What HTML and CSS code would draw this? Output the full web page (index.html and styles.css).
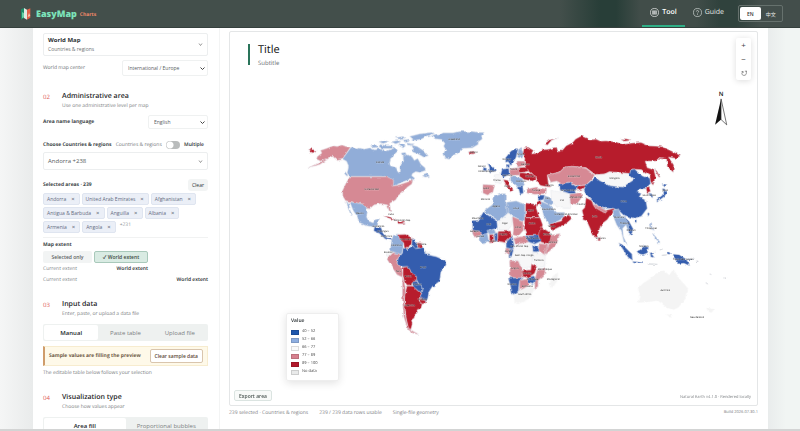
FILE: index.html
```html
<!DOCTYPE html>
<html lang="en">
<head>
<meta charset="utf-8">
<title>EasyMap Charts</title>
<link rel="stylesheet" href="styles.css">
</head>
<body>
<header class="topbar">
  <a class="brand" href="#">
    <svg class="brand-mark" viewBox="0 0 30 36" aria-hidden="true">
      <path d="M0 4 9 0v30l-9 5z" fill="#1f8a68"/><path d="M9 0l9 5v30l-9-5z" fill="#dfe9e2"/><path d="M18 5l10-4v28l-10 6z" fill="#e2604a"/><path d="M3 12l6 4v12l-6 3z" fill="#67cfa5"/><path d="M20 27l4-12 4 9z" fill="#f7c4b0"/>
    </svg>
    <span class="brand-name">EasyMap</span><span class="brand-sub">Charts</span>
  </a>
  <nav class="nav">
    <a class="nav-link active" href="#">
      <svg viewBox="0 0 28 28" aria-hidden="true"><circle cx="14" cy="14" r="12.5" fill="none" stroke="#fff" stroke-width="2"/><path d="M7 8h14v12H7z" fill="#fff" opacity=".85"/><path d="M7 12h14M7 16h14M12 8v12M17 8v12" stroke="#5c6864" stroke-width="1"/></svg>Tool</a>
    <a class="nav-link" href="#">
      <svg viewBox="0 0 28 28" aria-hidden="true"><circle cx="14" cy="14" r="12.5" fill="none" stroke="#dde3e0" stroke-width="2"/><path d="M10.500 11a3.500 3.500 0 1 1 5 3.200c-1 .6-1.500 1.200-1.500 2.800M14 19v2.500" fill="none" stroke="#dde3e0" stroke-width="2"/></svg>Guide</a>
  </nav>
  <div class="lang"><button class="on">EN</button><button>中文</button></div>
</header>

<main class="page">
  <aside class="side">
    <button class="mapcard"><span><b>World Map</b><small>Countries &amp; regions</small></span><svg class="chev" viewBox="0 0 10 10"><path d="M2 3l3 4 3-4"/></svg></button>
    <div class="row center-row"><label for="center">World map center</label>
      <select id="center" class="wide"><option>International / Europe</option></select></div>

    <section class="step">
      <div class="head"><span class="num">02</span><div><h2>Administrative area</h2><p>Use one administrative level per map</p></div></div>
      <div class="row lang-row"><label class="strong" for="names">Area name language</label>
        <select id="names"><option>English</option></select></div>
      <div class="row choose"><span class="strong">Choose Countries &amp; regions</span><span class="muted">Countries &amp; regions</span>
        <label class="switch"><input type="checkbox">Multiple</label></div>
      <button class="combo">Andorra +238<svg class="chev" viewBox="0 0 10 10"><path d="M2 3l3 4 3-4"/></svg></button>
      <div class="row selected"><span class="strong">Selected areas · 239</span><button class="clear">Clear</button></div>
      <div class="chips">
        <button>Andorra<i>×</i></button><button>United Arab Emirates<i>×</i></button><button>Afghanistan<i>×</i></button>
        <button>Antigua &amp; Barbuda<i>×</i></button><button>Anguilla<i>×</i></button><button>Albania<i>×</i></button>
        <button>Armenia<i>×</i></button><button>Angola<i>×</i></button><span>+231</span>
      </div>
      <div class="extent">
        <span class="strong">Map extent</span>
        <div class="extent-grid"><button>Selected only</button><button class="on">✓ World extent</button></div>
        <div class="pair small"><span>Current extent</span><b>World extent</b></div>
        <div class="pair"><span>Current extent</span><b>World extent</b></div>
      </div>
    </section>

    <section class="step">
      <div class="head"><span class="num">03</span><div><h2>Input data</h2><p>Enter, paste, or upload a data file</p></div></div>
      <div class="tabs"><button class="on">Manual</button><button>Paste table</button><button>Upload file</button></div>
      <div class="notice"><b>Sample values are filling the preview</b><button>Clear sample data</button></div>
      <p class="note">The editable table below follows your selection</p>
    </section>

    <section class="step">
      <div class="head"><span class="num">04</span><div><h2>Visualization type</h2><p>Choose how values appear</p></div></div>
      <div class="tabs"><button class="on">Area fill</button><button>Proportional bubbles</button></div>
    </section>
  </aside>

  <section class="stage">
    <div class="canvas">
      <svg class="world" viewBox="690 96 1584 1119" role="img" aria-label="World map">
        <defs><filter id="coast" filterUnits="userSpaceOnUse" x="690" y="96" width="1584" height="1119" color-interpolation-filters="sRGB"><feTurbulence type="fractalNoise" baseFrequency=".07" numOctaves="2" seed="4"/><feDisplacementMap in="SourceGraphic" scale="9" xChannelSelector="R" yChannelSelector="G"/></filter></defs>
        <g filter="url(#coast)">
        <g class="land" transform="translate(900 375)">
          <path class="p" d="M152 66L138 64 128 60 112 64 100 62 80 70 62 76 66 84 52 95 50 102 62 108 78 101 60 112 25 128 60 118 84 102 98 94 106 100 112 106 127 104z"/>
          <path class="r" d="M26 76l8-2 4-5 3 5 11 2-8 3-4 5-6-3z"/>
          <path class="l" d="M154 66l14 5 12-2 14 3 16-4 15 6 12-3 13 2 12 4 13-5 13-6 6 12-8 8-5 8-8 6-3 12 2 10 18 6 4 12 6 4 2-6-2-10 4-10 8-10-2-14 12-6 15 7 7 11 10-6 10 18 12 10 2 8-18 6-12-2-10 6-2 6 10 8-8 6-10-2-17 6-18 8-14 6-6-14 2-6-20-10H150l-8-10 4-22-6-14-12-6z"/>
          <path class="l" d="M212 62l18-2 4 6-14 2zM240 58l22 4 18 0-4 8-26 0-12-4zM236 50l18-4 14 4-18 5zM274 50l20-4 10 4-16 6zM296 60l10-4 12 6-8 6zM335 60l17 4 22 14 12 14-14 4-14-8-16-6-8-6 8-4zM310 44l18-2 4 6-16 4zM330 34l30-8 35-4 10 4-25 8-15 8-20 4zM286 38l24-4 6 4-18 4zM320 54l24 2-6 4-14 0zM304 84l12-2 6 8-12 4zM368 152l16-6 6 8-14 2zM136 140l8 10-2 4-8-8z"/>
          <path class="l" d="M398 32l22-3 10-6 30 0 18-4 40 0 18 3 18 0-8 10 2 10-12 8 0 8-18 10-30 2-12 14-14 6-14 13-10-4-6-14 6-12-6-10 4-8-10-12-20-2z"/>
          <path class="r" d="M507 80l14-2 6 4-6 5-12-1z"/>
          <path class="p" d="M150 155h112l20 10-2 18 20-4 40-14-4 12-14 10-10 12-16 12-8 14-18 10 3 26-5-3-5-18-20-4-20 4-14 12-10-4-8-10-12-2-28-6-14-3-8-14-1-16 9-20z"/>
          <path class="l" d="M150 231l28 4 12 3 10 10 3 12-3 15 6 13 14 6 6-10 14-3-7 17-10 8-22-4-24-10-4-16-13-20zM140 228l8 11 3 18 8 14-8-6-7-18z"/>
          <path class="r" d="M254 273l16 2 20 12-14-4zM290 288l16 2 14 6-28 0z"/>
          <path class="b" d="M224 304l20 3 6 18 12 14 20 3 8 6-14 0-20-6-16-16-18-8z"/>
        </g>
        <g class="land" transform="translate(1020 660)">
          <path class="l" d="M160 46l16-4 6 16 10 8-2 18-4 20-16-4-18-8 2-22z"/>
          <path class="r" d="M176 44l22-1 20 11-2 14-12 18-10-2-2-16-12-10z"/>
          <path class="b" d="M218 56l12 10 6 18-10 3-10-15z"/><path class="r" d="M232 68l18 2-2 12-12 2z"/>
          <path class="w" d="M142 97l12-3 8 6-12 12-10-5z"/>
          <path class="p" d="M150 104l12-6 10 2 12 4-8 10-4 16 14 12 4 18-2 12-16-8-16-24-14-22z"/>
          <path class="b" d="M190 84l14 4 14-12 10 10 22-4 6 10 8 12 26 6 28 12 2 12-16 22-4 28-22 16-10 16-4 22-10 6-14-12 8-18 2-6-12-16-6-10-16-26-12-16-20 0-12-10 4-16 12-14z"/>
          <path class="w" d="M254 98l8-3 10 4-8 6z"/>
          <path class="r" d="M190 142l14-2 12 16 14 12 2 16-14 2-4 10-12 0-8-12-4-16z"/>
          <path class="b" d="M218 186l14-2 8 12 10 10-2 12-12-4-16-14z"/>
          <path class="r" d="M202 198l16 0 16 14 12 8-6 12 0 16 8 4-4 14-12 4 2 8-8 6-2 10-8 6 2 12-4 16-8-2-6-26-4-30-2-40zM242 234l18 10-10 9-10-5z"/>
          <path class="p" d="M188 168l6 18 4 24-4 30 4 50 8 34 14 10 18 10-18-4-16-12-12-38-4-50z"/>
        </g>
        <g class="land" transform="translate(1410 375)">
          <path class="r" d="M164 68L176 66 192 76 186 86 206 84 218 74 236 72 262 66 266 80 280 74 290 62 310 52 318 42 336 32 350 38 362 44 380 42 394 48 410 47 440 50 460 58 486 54 515 52 540 62 575 64 600 74 635 92 620 100 598 96 614 120 612 142 594 124 592 100 570 98 560 108 528 108 534 128 554 134 560 158 550 180 542 166 542 150 516 134 486 132 482 146 440 142 380 150 350 128 310 124 286 126 270 142 234 150 236 170 240 186 214 182 200 168 204 158 186 146 176 138 164 122 166 98 160 84z"/>
          <path class="r" d="M226 56l14-12 24-4-20 8-10 12zM454 40l22 2 10 4-18 2z"/>
          <path class="p" d="M234 150l36-8 16-16 24-2 40 6 26 20-10 14-16 16-30 2-20-10-24 4-14-8-18 4z"/>
          <path class="b" d="M270 176l30-4 20 12 18 0-22 12 4 10-20 0-28-10z"/><path class="r" d="M322 188l12-6 20-2-14 12-16 4z"/>
          <path class="p" d="M300 208l36-6 2 14-16 22-20-2zM172 192l28-6 32 6-2 14-34 2-24-4z"/>
          <path class="w" d="M244 196l56 10 4 44-22 0-20-4-16-22z"/>
          <path class="l" d="M212 228l28 12 22 22 24 0-4 18-32 16-8 8-20-34zM226 212l18 6 8 22-12 0-18-10z"/>
          <path class="b" d="M206 210l20 0-4 14-16 4z"/>
          <path class="r" d="M240 298l36-10 10-16 14-2 6 12-16 14-44 22zM200 232l12-6 4 10-12 8z"/>
          <path class="b" d="M108 98l16-20 14-8 8 2-6 24-8 16-8 10-8-12-8 2z"/><path class="l" d="M146 74l10-8 6 22-4 12-14-4z"/>
          <path class="b" d="M54 112l10 8 12 10 2 8-20 4 2-14zM42 126l10 4-2 8-10-2zM98 132l20-2 2 18-20 10-6-12zM112 118l8 0 0 10-6 0z"/>
          <path class="p" d="M120 130l28-2 4 22-30 2zM40 178l36 2-6 22-16 8-14-6z"/>
          <path class="w" d="M74 150l20-4 8 16-8 14-18-4z"/>
          <path class="r" d="M102 164l14 2 2 12 14 18-6 4-18-20zM150 142l36 4 18 12-14 10-26-4-14-10zM148 128l22-2 8 12-26 6z"/>
          <path class="l" d="M122 152l36 8 8 18-16 16-10-14-16-12z"/><path class="b" d="M146 186l14-2 2 20-10 4z"/><path class="p" d="M142 108l20 0 4 14-22 4z"/>
          <path class="l" d="M70 216l26-10 12 0 0 26 8 8 2 22-30 26-10-6-36-24 26-18zM110 232l30-4 26 10v50l-16-4-38-20z"/>
          <path class="r" d="M168 234l34 4-2 10 10 30-42 0zM166 278l46 0 8 22-8 32-40 0-8-20z"/>
          <path class="b" d="M8 286l18 0 16-26 6 6 34 20 2 22-26 12-12 12-20-6-16 2z"/>
          <path class="w" d="M88 290l30-26 10 10-2 28-10 12-28 0z"/><path class="p" d="M128 274l32 14 2 28-16 18-16-4 2-20z"/>
        </g>
        <g class="land" transform="translate(1410 660)">
          <path class="p" d="M6 30l26 4 8 10-26 8z"/><path class="l" d="M30 46l24-6 4 24-16 8-14-14zM52 32l22-4 6 12-20 4z"/><path class="r" d="M60 44h12l2 22-14 3z"/><path class="b" d="M74 42l10-4v26h-8z"/>
          <path class="r" d="M86 34l38-1 2 15-20 20-22-5zM214 20l22 14 22 18-22 20-22-6-8-18z"/>
          <path class="p" d="M132 54l34-6 14 18-20 4-22 2zM246 46l26-6-10 32-32 32-4-18 14-14zM210 70l26 4-8 32-22-14z"/>
          <path class="b" d="M166 48l40-2 8 18-18 8-18-6zM110 66l18-18 6 28-4 12-20-4zM188 76h18v20h-16zM118 88h14v14l-14 12z"/>
          <path class="p" d="M108 84l12 2 0 20-12-8zM120 122l26 0 12 28 2 26-38-4z"/>
          <path class="w" d="M138 76l50-4 2 28-4 40-28 6-10-24-26-2zM192 96l36 12-2 32-20 2-16-18z"/>
          <path class="r" d="M158 152l26-2 2-18 16 8-6 20-20 14-16-4z"/><path class="p" d="M204 148l24-2-2 18-20 18v18l-10 6 0-26 4-16zM150 182l24-6 10 16-18 14-16 6z"/>
          <path class="b" d="M176 172l18-4 6 14-10 12-14-6zM116 174l48 0-14 8-4 40-16 2z"/>
          <path class="n" d="M132 224l18-12 34-16 10 12-14 28-34 16-10-4zM246 172l20-14-4 28-14 18-6-12z"/>
        </g>
        <g class="land" transform="translate(1740 375)">
          <path class="w" d="M50 148l24 0 16-8 20 2 42 4 12 18-34 22-40-4-30-16z"/>
          <path class="b" d="M20 180L48 156 60 166 90 182 130 186 164 164 150 152 154 134 166 132 186 150 212 160 214 176 200 190 182 192 172 200 186 206 180 216 200 226 204 250 186 274 164 280 150 276 134 272 118 256 100 250 72 250 50 240 36 224 18 206 14 194z"/>
          <path class="r" d="M20 218L36 226 44 240 80 256 104 250 108 260 94 270 84 284 64 300 58 322 50 338 42 334 32 310 22 288 10 284 12 272 8 256 16 248z"/>
          <path class="p" d="M40 236l40 20-2 9-32-18z"/>
          <path class="l" d="M100 256l18-4 6 18 26 20 8 30-10 2-8-22-10 10 2 24 8 18 4 8-10-8-8-32-14-20-8-20z"/>
          <path class="b" d="M132 272l18 18 12 22-4 14-10 4 2-28zM164 286l8-1 0 7-6 1zM206 262l5 3-3 9-3-5zM250 190l8 2 4 14-8 10-20 14-2-6 18-14zM248 175l16 4-8 7zM208 204l10 2 4 12-8-2z"/>
          <path class="r" d="M200 190l10-3 4 12-10 4zM225 130l8 8 10 18-4 0z"/>
          <path class="l" d="M212 292l6 2 0 14 8 8-10-2zM222 326l10 12 6 12-10-6zM234 350l8-2 0 8-8 0z"/>
        </g>
        <g class="land" transform="translate(1710 660)">
          <path class="r" d="M86 52l8 2-2 9-6-1z"/>
          <path class="b" d="M148 68l12 6 28 28 2 20-14-10zM190 124l32 4 0 4-30-3zM202 92l10-2 14-14 12 6-4 20-12 5-12-2zM242 98l16-2-10 7 8 10-6-2-4 5zM292 96l8 0 6 8-12-2zM308 102l22 2 22 14 10 20-18-8-16 2-10-14zM354 118l18-5-8 8z"/>
          <path class="n" d="M206 248l6-26-6-16 16-16 22-14 18-16 22-8 16 14 12-18 18 28 26 30-4 26-24 30-16 8-20-8-26-20-30 4zM294 284l14 2-6 8zM412 264l22 4-6 10-10-2z"/>
          <path class="g" d="M272 90l8-3M278 106l14-1M236 132l28 1M384 122l3 2M410 188l6 5M422 162l4 2M464 176l6-3M380 124l6 1"/>
        </g>
        </g>
        <g class="names">
          <text x="1141" y="488">Canada</text><text x="1116" y="570">United States</text><text x="1080" y="643">Mexico</text><text x="1364" y="421">Greenland</text><text x="1174" y="646">Cuba</text><text x="1208" y="663">Dominican Rep.</text><text x="1136" y="680">Guatemala</text><text x="1150" y="695">Nicaragua</text><text x="1160" y="710">Costa Rica</text>
          <text x="1270" y="804">Brazil</text><text x="1196" y="816">Peru</text><text x="1190" y="739">Colombia</text><text x="1218" y="720">Venezuela</text><text x="1166" y="760">Ecuador</text><text x="1230" y="918">Argentina</text><text x="1226" y="830">Bolivia</text><text x="1250" y="854">Paraguay</text><text x="1268" y="900">Uruguay</text><text x="1264" y="736">Suriname</text>
          <text x="1798" y="474">Russia</text><text x="1724" y="532">Kazakhstan</text><text x="1846" y="537">Mongolia</text><text x="1873" y="606">China</text><text x="1786" y="650">India</text><text x="1998" y="574">Japan</text><text x="1950" y="588">South Korea</text><text x="1956" y="687">Philippines</text><text x="1860" y="655">Myanmar</text><text x="1876" y="672">Thailand</text><text x="1896" y="692">Vietnam</text><text x="1804" y="718">Sri Lanka</text><text x="1934" y="740">Malaysia</text><text x="2052" y="780">Papua New Guinea</text><text x="1998" y="872">Australia</text><text x="2094" y="956">New Zealand</text>
          <text x="1422" y="460">Iceland</text><text x="1522" y="480">Norway</text><text x="1564" y="464">Finland</text><text x="1446" y="500">Ireland</text><text x="1462" y="516">United Kingdom</text><text x="1524" y="528">Germany</text><text x="1542" y="511">Poland</text><text x="1492" y="542">France</text><text x="1460" y="568">Spain</text><text x="1522" y="561">Italy</text><text x="1590" y="530">Ukraine</text><text x="1564" y="546">Romania</text><text x="1610" y="573">Türkiye</text><text x="1578" y="496">Belarus</text><text x="1650" y="558">Georgia</text><text x="1706" y="573">Turkmenistan</text><text x="1730" y="593">Afghanistan</text><text x="1746" y="614">Pakistan</text><text x="1688" y="602">Iran</text><text x="1644" y="598">Iraq</text><text x="1648" y="630">Saudi Arabia</text><text x="1700" y="646">United Arab Emirates</text>
          <text x="1458" y="600">Morocco</text><text x="1490" y="622">Algeria</text><text x="1550" y="628">Libya</text><text x="1594" y="632">Egypt</text><text x="1434" y="656">Mauritania</text><text x="1468" y="674">Mali</text><text x="1516" y="672">Niger</text><text x="1556" y="684">Chad</text><text x="1598" y="672">Sudan</text><text x="1424" y="696">Senegal</text><text x="1442" y="712">Guinea</text><text x="1480" y="726">Ghana</text><text x="1512" y="706">Nigeria</text><text x="1644" y="706">Ethiopia</text><text x="1660" y="730">Somalia</text><text x="1600" y="716">South Sudan</text><text x="1560" y="740">Cen. African Rep.</text><text x="1526" y="755">Congo</text><text x="1574" y="768">Dem. Rep. Congo</text><text x="1618" y="782">Tanzania</text><text x="1546" y="808">Angola</text><text x="1584" y="822">Zambia</text><text x="1636" y="810">Mozambique</text><text x="1600" y="840">Zimbabwe</text><text x="1538" y="854">Namibia</text><text x="1584" y="862">Botswana</text><text x="1576" y="886">South Africa</text><text x="1662" y="840">Madagascar</text><text x="1656" y="682">Yemen</text>
        </g>
        <g transform="translate(1740 0)">
          <text class="north" x="426" y="286">N</text>
          <path d="M426 296l-18 78 18-16z" fill="#111"/><path d="M426 296l17 78-17-16z" fill="#fff" stroke="#333" stroke-width="2"/>
        </g>
      </svg>
      <div class="title"><h1>Title</h1><p>Subtitle</p></div>
      <div class="zoom"><button aria-label="Zoom in">+</button><button aria-label="Zoom out">−</button><button aria-label="Reset"><svg viewBox="0 0 20 20"><path d="M2 5h5v5M6 6c-6 6-2 12 4 12s8-4 8-9V4M13 4h7"/></svg></button></div>
      <div class="legend">
        <h3>Value</h3>
        <ul><li><i class="sb"></i>40 – 52</li><li><i class="sl"></i>52 – 66</li><li><i class="sw"></i>66 – 77</li><li><i class="sp"></i>77 – 89</li><li><i class="sr"></i>89 – 100</li><li><i class="sn"></i>No data</li></ul>
      </div>
      <button class="export">Export area</button>
      <span class="credit">Natural Earth v4.1.0 · Rendered locally</span>
    </div>
    <footer class="status"><span>239 selected · Countries &amp; regions</span><span>239 / 239 data rows usable</span><span>Single-file geometry</span><span class="build">Build 2026.07.30.1</span></footer>
  </section>
</main>
</body>
</html>
```
FILE: styles.css
```css
* { box-sizing: border-box; margin: 0; padding: 0; }
body {
  height: 100vh;
  display: flex;
  flex-direction: column;
  overflow: hidden;
  font: 6px/8px "Open Sans", "Noto Sans CJK SC", sans-serif;
  text-rendering: geometricPrecision;
  color: #2b3235;
  background: linear-gradient(90deg, #f5f6f6, #e9ebeb 33px, #e9ecec calc(100% - 32px), #f1f5f3 calc(100% - 14px));
  border-bottom: 2px solid #d3d4d4;
}
button, select, input { font: inherit; color: inherit; border: 0; background: none; }
button { white-space: nowrap; }
a { color: inherit; text-decoration: none; }
svg { display: block; }

.topbar {
  flex: none;
  height: 28px;
  display: flex;
  align-items: center;
  padding: 0 17px 0 21px;
  color: #e3e8e6;
  background: linear-gradient(90deg, #434f4b 0 70%, #283e38 75% 77%, #414d49 80% 87%, #30423d 90% 92%, #434e4b 95%);
  border-bottom: 1px solid #35403d;
}
.brand { display: flex; align-items: center; margin-right: auto; }
.brand-mark { width: 10px; height: 12px; margin-right: 5px; }
.brand-name { font-size: 9px; line-height: 14px; font-weight: 800; color: #7ce3ba; }
.brand-sub { font-size: 5px; font-weight: 700; color: #ee8868; margin: 3px 0 0 3px; }
.nav { display: flex; align-self: stretch; margin-right: 6px; }
.nav-link { display: flex; align-items: center; gap: 3px; padding: 0 8px; font-size: 7px; border-bottom: 2px solid transparent; }
.nav-link svg { width: 9px; height: 9px; }
.nav-link.active { color: #fff; font-weight: 600; border-color: #2fae86; }
.lang { display: flex; width: 45px; height: 17px; padding: 1px; border: 1px solid #66716d; border-radius: 2px; }
.lang button { flex: 1; font-size: 5px; border-radius: 2px; }
.lang .on { background: #fff; color: #333; font-weight: 600; }

.page {
  flex: 1;
  min-height: 0;
  margin: 0 32px 0 33px;
  display: grid;
  grid-template-columns: 187px 1fr;
  background: #fff;
}
.side { padding: 5px 11px 0 10px; border-right: 1px solid #f3f4f4; overflow: hidden; }
.chev { width: 5px; height: 5px; fill: none; stroke: #777; stroke-width: 1.500; }
.mapcard, .combo {
  width: 100%;
  display: flex;
  align-items: center;
  justify-content: space-between;
  text-align: left;
  border: 1px solid #eceeef;
  border-radius: 2px;
  padding: 2px 4px;
}
.mapcard b { display: block; font-size: 6px; line-height: 9px; }
.mapcard small { display: block; font-size: 5px; line-height: 8px; color: #6d7375; }
.row { display: flex; align-items: center; justify-content: space-between; }
.strong { font-size: 5px; font-weight: 700; color: #41474a; }
.muted { font-size: 5px; color: #75797c; }
.center-row { height: 16px; margin-top: 4px; font-size: 5px; color: #6b7174; }
select {
  appearance: none;
  width: 60px;
  height: 14px;
  padding: 0 5px;
  border: 1px solid #eff1f1;
  border-radius: 2px;
  font-size: 5px;
  color: #596063;
  background: url("data:image/svg+xml,%3Csvg xmlns='http://www.w3.org/2000/svg' viewBox='0 0 10 10'%3E%3Cpath d='M1 3l4 4 4-4' fill='none' stroke='%23444' stroke-width='2'/%3E%3C/svg%3E") right 2px center / 5px 5px no-repeat;
}
select.wide { width: 86px; height: 16px; }
.step { margin-top: 16px; }
.head { display: flex; }
.num { width: 19px; line-height: 10px; color: #e05a55; }
h2 { font-size: 7px; line-height: 10px; font-weight: 600; color: #1d2326; }
.head p { color: #7b8082; font-size: 5px; }
.lang-row { height: 14px; margin-top: 5px; }
.choose { height: 12px; margin-top: 10px; padding-right: 4px; }
.switch { display: flex; align-items: center; gap: 4px; font-size: 5px; font-weight: 600; }
.switch input { appearance: none; width: 14px; height: 8px; border-radius: 4px; background: radial-gradient(circle at 4px 50%, #fff 3px, #b9bcbc 4px); }
.combo { height: 18px; margin-top: 1px; color: #565c5e; }
.selected { height: 12px; margin-top: 9px; }
.clear { height: 12px; padding: 0 4px; background: #f2f4f4; border-radius: 3px; font-size: 5px; font-weight: 500; }
.chips { display: flex; flex-wrap: wrap; gap: 2px; margin-top: 2px; }
.chips button { display: flex; align-items: center; gap: 5px; height: 12px; padding: 0 4px 0 3px; font-size: 5px; color: #626b80; background: #ebeff7; border: 1px solid #dfe5f0; border-radius: 2px; }
.chips i { font-style: normal; font-size: 6px; color: #4c5465; }
.chips span { padding-left: 2px; font-size: 5px; color: #8d9196; }
.extent { margin-top: 4px; padding-top: 3px; border-top: 1px solid #f1f2f2; }
.extent > .strong { display: block; }
.extent-grid { display: grid; grid-template-columns: 49px 54px; gap: 2px; margin-top: 2px; }
.extent-grid button { height: 12px; font-size: 5px; font-weight: 600; color: #5b6163; background: #f2f4f4; border-radius: 2px; }
.extent-grid .on { color: #3b4a44; background: #d9ebe3; border: 1px solid #a9c9bb; }
.pair { display: flex; justify-content: space-between; margin-top: 3px; font-size: 5px; color: #82878a; }
.pair.small { width: 105px; margin-top: 2px; }
.pair b { color: #25292c; font-weight: 600; }
.tabs { display: flex; height: 17px; margin-top: 6px; padding: 1px; background: #eef1f0; border-radius: 2px; }
.tabs button { flex: 1; font-size: 6px; color: #7b8082; border-radius: 2px; }
.tabs .on { background: #fff; color: #24292b; font-weight: 600; }
.notice { display: flex; align-items: center; justify-content: space-between; height: 20px; margin-top: 5px; padding: 0 4px; background: #fef9e9; border: 1px solid #f7eccf; border-left: 2px solid #cf9c6b; }
.notice b { font-size: 5px; font-weight: 700; color: #6e5b47; }
.notice button { height: 14px; padding: 0 4px; font-size: 5px; font-weight: 600; color: #5e4b37; background: #fff; border: 1px solid #d9c5ad; border-radius: 2px; }
.note { margin-top: 3px; font-size: 5px; color: #7b8082; }

.stage { display: flex; flex-direction: column; min-width: 0; min-height: 0; padding: 3px 10px 12px 9px; }
.canvas { position: relative; flex: 1; min-height: 0; border: 1px solid #e4e6e7; border-radius: 2px; }
.world { width: 100%; height: 100%; }
.land path { stroke: #e3e4ea; stroke-width: 1.500; stroke-linejoin: round; }
.land .b { fill: #345dae; }
.land .l { fill: #91add8; }
.land .w { fill: #f7f7f8; }
.land .p { fill: #d68994; }
.land .r { fill: #b71c2c; }
.land .n { fill: #f4f4f4; stroke: #f7f7f7; }
.land .g { fill: none; stroke: #9aa0ac; }
.names { font-size: 7px; text-anchor: middle; fill: #111; paint-order: stroke; stroke: #fff; stroke-opacity: .4; stroke-width: 1.500; }
.north { font-size: 18px; font-weight: 600; text-anchor: middle; fill: #111; }
.title { position: absolute; left: 18px; top: 12px; padding-left: 10px; }
.title::before { content: ""; position: absolute; left: 0; top: 0; width: 2px; height: 21px; background: #2a745a; }
h1 { font-size: 11px; line-height: 11px; font-weight: 500; color: #111; }
.title p { margin-top: 4px; color: #6c7174; }
.zoom { position: absolute; right: 6px; top: 6px; width: 15px; display: flex; flex-direction: column; background: #fff; border-radius: 2px; box-shadow: 0 1px 6px rgba(0, 0, 0, .14); }
.zoom button { height: 14px; display: grid; place-items: center; font-size: 8px; color: #444; }
.zoom svg { width: 6px; height: 6px; fill: none; stroke: #555; stroke-width: 2; }
.legend { position: absolute; left: 56px; bottom: 24px; width: 53px; padding: 3px 4px 0; height: 68px; background: #fff; border: 1px solid #eee; border-radius: 2px; box-shadow: 0 2px 8px rgba(0, 0, 0, .12); }
.legend h3 { font-size: 5px; line-height: 8px; font-weight: 600; margin-bottom: 3px; }
.legend ul { list-style: none; }
.legend li { display: flex; align-items: center; gap: 3px; font-size: 4px; color: #444; }
.legend i { width: 8px; height: 5px; border: 1px solid rgba(0, 0, 0, .12); }
.sb { background: #1d56ad; }
.sl { background: #8eaee0; }
.sw { background: #fafafa; }
.sp { background: #d7808e; }
.sr { background: #b2182b; }
.sn { background: #e9eaea; }
.export { position: absolute; left: 4px; bottom: 4px; height: 11px; padding: 0 4px; font-size: 5px; font-weight: 600; color: #4c5754; background: #f8faf9; border: 1px solid #dbe4e1; border-radius: 2px; }
.credit { position: absolute; right: 6px; bottom: 3px; font-size: 4px; color: #7d8184; }
.status { display: flex; gap: 11px; margin-top: 3px; font-size: 5px; line-height: 8px; color: #7d8184; }
.build { margin-left: auto; font-size: 4px; }
```
